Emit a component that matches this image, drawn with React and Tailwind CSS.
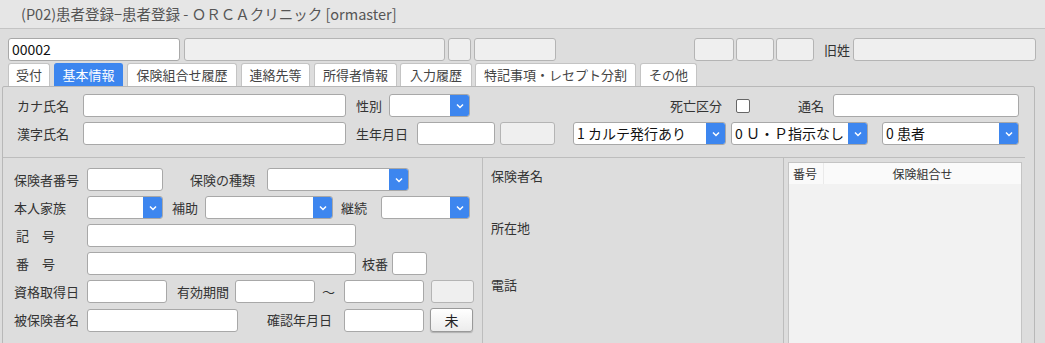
const font = { fontFamily: '"Noto Sans CJK JP", "Noto Sans", "Liberation Sans", sans-serif' };

const Box = ({ w, gray, children, className = '' }) => (
  <div
    className={`${w} h-[23px] shrink-0 rounded-[3px] border border-[#a8a8a8] flex items-center px-[3px] text-[14px] text-[#111] ${
      gray ? 'bg-[#efefef] border-[#b4b4b4]' : 'bg-white'
    } ${className}`}
  >
    {children}
  </div>
);

const Select = ({ w, text, className = '' }) => (
  <div className={`${w} h-[23px] shrink-0 flex rounded-[3px] border border-[#a8a8a8] bg-white overflow-hidden ${className}`}>
    <div className="flex-1 flex items-center px-[3px] text-[14px] text-[#111] whitespace-nowrap">{text}</div>
    <div className="w-[19px] bg-[#3d86ef] flex items-center justify-center">
      <svg width="8" height="6" viewBox="0 0 8 6">
        <polyline points="1,1.5 4,4.5 7,1.5" fill="none" stroke="white" strokeWidth="1.5" />
      </svg>
    </div>
  </div>
);

const Label = ({ w, children, className = '' }) => (
  <div className={`${w} shrink-0 text-[13px] text-[#333] whitespace-nowrap ${className}`}>{children}</div>
);

const tabs = [
  { name: '受付', w: 'w-[42px]', ml: 'ml-0' },
  { name: '基本情報', w: 'w-[69px]', ml: 'ml-[4px]', active: true },
  { name: '保険組合せ履歴', w: 'w-[110px]', ml: 'ml-[4px]' },
  { name: '連絡先等', w: 'w-[69px]', ml: 'ml-[4px]' },
  { name: '所得者情報', w: 'w-[83px]', ml: 'ml-[4px]' },
  { name: '入力履歴', w: 'w-[72px]', ml: 'ml-[3px]' },
  { name: '特記事項・レセプト分割', w: 'w-[161px]', ml: 'ml-[3px]' },
  { name: 'その他', w: 'w-[57px]', ml: 'ml-[4px]' },
];

export default function App() {
  return (
    <div className="w-[1045px] h-[343px] overflow-hidden bg-[#dddddd]" style={font}>
      {/* title bar */}
      <div className="h-[29px] bg-[#e6e6e6] border-b border-[#c4c4c4] flex items-center pl-[21px] text-[14.5px] text-[#555]">
        (P02)患者登録−患者登録 - ＯＲＣＡクリニック [ormaster]
      </div>

      {/* top row */}
      <div className="mt-[9px] pl-[8px] flex items-center">
        <Box w="w-[172px]">00002</Box>
        <Box w="w-[261px]" gray className="ml-[4px]" />
        <Box w="w-[23px]" gray className="ml-[3px]" />
        <Box w="w-[82px]" gray className="ml-[3px]" />
        <Box w="w-[40px]" gray className="ml-[138px]" />
        <Box w="w-[38px]" gray className="ml-[2px]" />
        <Box w="w-[38px]" gray className="ml-[2px]" />
        <Label w="w-[29px]" className="ml-[10px]">旧姓</Label>
        <Box w="w-[183px]" gray />
      </div>

      {/* tabs */}
      <div className="mt-[2px] pl-[8px] flex h-[23px]">
        {tabs.map((t) => (
          <div
            key={t.name}
            className={`${t.w} ${t.ml} shrink-0 rounded-t-[3px] border border-b-0 flex items-center justify-center text-[13px] ${
              t.active ? 'bg-[#3d86ef] border-[#3d86ef] text-white' : 'bg-white border-[#c4c4c4] text-[#444]'
            }`}
          >
            {t.name}
          </div>
        ))}
      </div>

      {/* panel */}
      <div className="ml-[2px] w-[1033px] h-[300px] border border-[#b8b8b8] rounded-t-[2px]">
        {/* upper section */}
        <div className="w-[1022px] h-[71px] border-b border-[#bdbdbd] pl-[14px] pt-[7px] flex flex-col gap-[5px]">
          <div className="flex items-center">
            <Label w="w-[66px]">カナ氏名</Label>
            <Box w="w-[263px]" />
            <Label w="w-[33px]" className="ml-[10px]">性別</Label>
            <Select w="w-[81px]" />
            <Label w="w-[66px]" className="ml-[200px]">死亡区分</Label>
            <div className="w-[14px] h-[14px] shrink-0 rounded-[2px] border border-[#666] bg-white" />
            <Label w="w-[35px]" className="ml-[48px]">通名</Label>
            <Box w="w-[186px]" />
          </div>
          <div className="flex items-center">
            <Label w="w-[66px]">漢字氏名</Label>
            <Box w="w-[263px]" />
            <Label w="w-[61px]" className="ml-[10px]">生年月日</Label>
            <Box w="w-[78px]" />
            <Box w="w-[55px]" gray className="ml-[5px]" />
            <Select w="w-[153px]" text="1 カルテ発行あり" className="ml-[18px]" />
            <Select w="w-[137px]" text="0 Ｕ・Ｐ指示なし" className="ml-[5px]" />
            <Select w="w-[137px]" text="0 患者" className="ml-[14px]" />
          </div>
        </div>

        {/* lower section */}
        <div className="flex h-[230px]">
          <div className="w-[480px] shrink-0 border-r border-[#bdbdbd] pl-[11px] pt-[10px] flex flex-col gap-[5px]">
            <div className="flex items-center">
              <Label w="w-[73px]">保険者番号</Label>
              <Box w="w-[76px]" />
              <Label w="w-[77px]" className="ml-[27px]">保険の種類</Label>
              <Select w="w-[142px]" />
            </div>
            <div className="flex items-center">
              <Label w="w-[73px]">本人家族</Label>
              <Select w="w-[76px]" />
              <Label w="w-[33px]" className="ml-[9px]">補助</Label>
              <Select w="w-[128px]" />
              <Label w="w-[40px]" className="ml-[8px]">継続</Label>
              <Select w="w-[89px]" />
            </div>
            <div className="flex items-center">
              <Label w="w-[73px]" className="pl-[2px]">記　号</Label>
              <Box w="w-[269px]" />
            </div>
            <div className="flex items-center">
              <Label w="w-[73px]" className="pl-[2px]">番　号</Label>
              <Box w="w-[269px]" />
              <Label w="w-[30px]" className="ml-[6px]">枝番</Label>
              <Box w="w-[35px]" />
            </div>
            <div className="flex items-center">
              <Label w="w-[73px]">資格取得日</Label>
              <Box w="w-[80px]" />
              <Label w="w-[58px]" className="ml-[10px]">有効期間</Label>
              <Box w="w-[80px]" />
              <Label w="w-[22px]" className="ml-[7px]">～</Label>
              <Box w="w-[80px]" />
              <Box w="w-[43px]" gray className="ml-[7px]" />
            </div>
            <div className="flex items-center">
              <Label w="w-[73px]">被保険者名</Label>
              <Box w="w-[151px]" />
              <Label w="w-[77px]" className="ml-[29px]">確認年月日</Label>
              <Box w="w-[80px]" />
              <button className="ml-[6px] w-[43px] h-[24px] shrink-0 rounded-[3px] border border-[#999] bg-gradient-to-b from-white to-[#ececec] text-[14px] text-[#222] shadow-[0_1px_1px_rgba(0,0,0,0.2)]">
                未
              </button>
            </div>
          </div>

          <div className="w-[301px] shrink-0 border-r border-[#bdbdbd] pl-[8px] text-[13px] text-[#333]">
            <div className="mt-[8px]">保険者名</div>
            <div className="mt-[32px]">所在地</div>
            <div className="mt-[38px]">電話</div>
          </div>

          <div className="ml-[4px] mt-[4px] w-[234px] border border-[#c4c4c4] bg-[#f2f2f2]">
            <div className="flex h-[21px] bg-[#fafafa] text-[12px] text-[#333]">
              <div className="w-[34px] flex items-center pl-[4px]">番号</div>
              <div className="flex-1 flex items-center justify-center border-l border-[#eaeaea]">保険組合せ</div>
            </div>
          </div>
        </div>
      </div>
    </div>
  );
}
